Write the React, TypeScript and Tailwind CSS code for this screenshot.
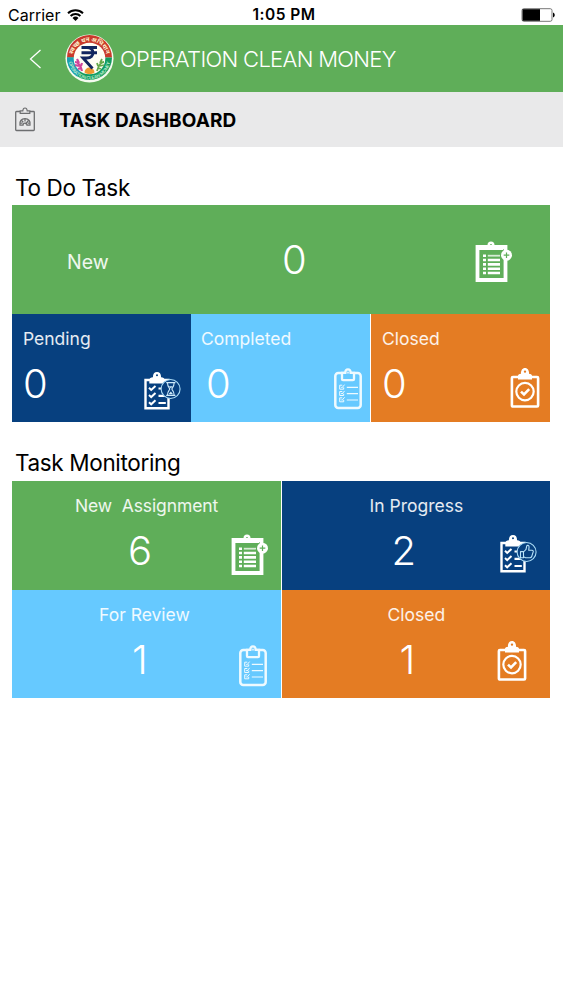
import type { ReactNode } from 'react'

interface TileProps {
  label: string
  count: number
  icon: ReactNode
  color: string
  labelClass: string
  countClass: string
  iconClass: string
}

function ListPlusIcon() {
  return (
    <svg width="38" height="42" viewBox="0 0 38 42" fill="none" aria-hidden="true">
      <path d="M2.500 6h28v33h-28z" stroke="#fff" strokeWidth="3.800" />
      <path d="M4 7h24" stroke="#fff" strokeWidth="4" />
      <path fillRule="evenodd" d="M12.500 6V4a3.500 3.500 0 0 1 7 0v2zM16 2.900a.9.9 0 1 0 0 1.800.9.9 0 0 0 0-1.800z" fill="#fff" />
      <path d="M8 14.700h3M8 19h3M8 23.400h3M8 27.800h3M8 32h3" stroke="#fff" strokeWidth="2.600" />
      <path d="M12.800 14.700H25" stroke="#fff" strokeWidth="1.800" opacity=".75" />
      <path d="M12.800 19H25M12.800 23.400H25M12.800 27.800H25M12.800 32H25" stroke="#fff" strokeWidth="2.600" />
      <circle cx="31.500" cy="14.200" r="5.500" fill="#fff" />
      <path d="M28.700 14.200h5.600M31.500 11.400V17" stroke="#5fae59" strokeWidth="1.200" />
    </svg>
  )
}

function ChecklistIcon({ children }: { children: ReactNode }) {
  return (
    <svg width="38" height="40" viewBox="0 0 38 40" fill="none" aria-hidden="true">
      <path d="M1.500 9h23v28.300h-23z" stroke="#fff" strokeWidth="2.400" />
      <path fillRule="evenodd" d="M5.300 12.500V9.200c0-2 1.600-2.700 3.600-2.900C8.900 2.800 10.400 1 13 1s4.100 1.800 4.100 5.300c2 .2 3.600.9 3.600 2.900v3.300zM13 3.200a1 1 0 1 0 0 2 1 1 0 0 0 0-2z" fill="#fff" />
      <path d="m5 16.800 2.200 2.100 4.300-4M5 24l2.200 2.100 4.300-4M5 31.200l2.200 2.100 4.300-4" stroke="#fff" strokeWidth="2" />
      <path d="M14.500 17.500H21M14.500 24.800h7.300M14.500 32h7.300" stroke="#fff" strokeWidth="2.200" />
      <circle cx="26.600" cy="18" r="9.500" fill="#07407f" stroke="#a9daf5" strokeWidth="1.100" />
      {children}
    </svg>
  )
}

function HourglassIcon() {
  return (
    <ChecklistIcon>
      <path d="M22.200 11.600h9.200M22.200 24.400h9.200M23.500 12c0 4 2.200 4.600 2.200 6s-2.200 2-2.200 6M30.100 12c0 4-2.200 4.600-2.200 6s2.200 2 2.200 6" stroke="#cdeafa" strokeWidth="1.100" />
      <path d="M24.800 15.200h4l-2 2zM24.500 23.200l2.300-2.800 2.300 2.800z" fill="#cdeafa" />
    </ChecklistIcon>
  )
}

function ThumbIcon() {
  return (
    <ChecklistIcon>
      <path d="M20.500 17.600h3v6.200h-3zM23.500 18l2.500-2.700.7-3.200c.3-1.200 2.400-1 2.400.8l-.4 3.300h3.200c1.400 0 1.600 1.100 1.200 2l-1.400 4.300c-.3.900-.9 1.200-1.800 1.200h-4.300l-2.100-.9" stroke="#b9e2f8" strokeWidth="1.100" strokeLinejoin="round" />
    </ChecklistIcon>
  )
}

function ReviewIcon() {
  return (
    <svg width="28" height="42" viewBox="0 0 28 42" fill="none" stroke="#eefaff" aria-hidden="true">
      <rect x="1.300" y="5" width="25.400" height="35" rx="3" strokeWidth="2.500" />
      <path d="M8 4.800v6.400c0 .6.400 1 1 1h10c.6 0 1-.4 1-1V4.800h-3.300C16.700 2.600 15.600 1.400 14 1.400s-2.700 1.200-2.700 3.400z" fill="#66c9ff" strokeWidth="2.300" />
      <circle cx="14" cy="4.600" r=".7" strokeWidth="1" />
      <path d="M9.700 19.400v1.800h-4v-4h2.600M9.700 25.700v1.800h-4v-4h2.600M9.700 32v1.800h-4v-4h2.600M7 18.800l1 1 2.600-3.200M7 25.100l1 1 2.600-3.200M7 31.400l1 1 2.600-3.200" strokeWidth="1" />
      <path d="M12.800 19.400H24M12.800 25.700H24M12.800 32H24" strokeWidth="1.200" />
    </svg>
  )
}

function ClosedIcon() {
  return (
    <svg width="30" height="42" viewBox="0 0 30 42" fill="none" aria-hidden="true">
      <rect x="1.900" y="10" width="26.200" height="29.500" rx="1" stroke="#fff" strokeWidth="2.600" />
      <path fillRule="evenodd" d="M8 12.500V9c0-1.400 1-2 2.800-2C11 3.200 12.300 1 15 1s4 2.200 4.200 6c1.800 0 2.800.6 2.800 2v3.500zM15 3.400a1.200 1.200 0 1 0 0 2.400 1.200 1.200 0 0 0 0-2.400z" fill="#fff" />
      <circle cx="15" cy="24.600" r="8.700" stroke="#fff" strokeWidth="2.200" />
      <path d="m11 24.600 3 2.900 5.200-5.400" stroke="#fff" strokeWidth="2.600" />
    </svg>
  )
}

function DashboardIcon() {
  return (
    <svg width="20" height="25" viewBox="0 0 20 25" fill="none" stroke="#6d6e70" aria-hidden="true">
      <path d="M5 4.500H1.500c-.5 0-.8.3-.8.800v17.400c0 .5.3.8.8.8h17c.5 0 .8-.3.8-.8V5.300c0-.5-.3-.8-.8-.8H15" strokeWidth="1.300" />
      <path d="M5.200 6.300V3.800h2.600C8 1.900 8.700 1 10 1s2 .9 2.200 2.800h2.600v2.500z" strokeWidth="1.200" />
      <path d="M5 18.200c-.9-4 1.500-6.600 5-6.600s5.900 2.600 5 6.600h-3c0-1.200-.8-2-2-2s-2 .8-2 2z" strokeWidth="1.300" />
      <path d="M10 11.500v3M6.300 13.300l2 2M13.700 13.300l-3.300 3.800M5 16.200h2.500M12.800 16.200H15" strokeWidth="1.300" />
    </svg>
  )
}

function Logo() {
  return (
    <svg width="49" height="49" viewBox="0 0 49 49" fill="none" aria-hidden="true">
      <defs>
        <path id="arc-top" d="M7.300 24.500a17.200 17.200 0 0 1 34.400 0" />
        <path id="arc-bottom" d="M3.600 24.500a20.900 20.900 0 0 0 41.800 0" />
      </defs>
      <circle cx="24.500" cy="24.500" r="24" fill="#f4fbef" />
      <path d="M2 23.500a22.500 22.500 0 0 1 45 0z" fill="#c93a2b" />
      <path d="M2 23.500a22.500 22.500 0 0 0 45 0z" fill="#139a60" />
      <path d="M2 23.500c0 8 4 15 10 19l5-7-5-12z" fill="#1b9fb4" />
      <circle cx="24.500" cy="24.500" r="15.800" fill="#fffef4" />
      <path d="M10 28c3 0 5 2 7 9M12 25l2 4M10 31l4 1M13 35l3-1M17 29l-1 3" stroke="#d0459b" strokeWidth="2.200" />
      <path d="M39 28c-3 0-5 2-7 9M37 25l-2 4M39 31l-4 1M36 35l-3-1M32 29l1 3" stroke="#65a94a" strokeWidth="1.800" />
      <path d="M19.500 38.500a5 5 0 0 1 10 0c-3 2-7 2-10 0z" fill="#ef9a31" />
      <path d="M16.500 13.500h15.500M16.500 18.700h15.500M18 13.500h4c8 0 8 10.500 0 10.500h-4l9.500 10.500" stroke="#12265f" strokeWidth="2.900" />
      <text fill="#fff3d0" fontSize="6" fontWeight="700" fontFamily="'Noto Sans', 'DejaVu Sans', sans-serif">
        <textPath href="#arc-top" startOffset="50%" textAnchor="middle">स्वच्छ धन अभियान</textPath>
      </text>
      <text fill="#b9ecc9" fontSize="4.600" fontWeight="600" fontFamily="Inter, sans-serif">
        <textPath href="#arc-bottom" startOffset="50%" textAnchor="middle" textLength="58">OPERATION CLEAN MONEY</textPath>
      </text>
    </svg>
  )
}

function StatusBar() {
  return (
    <div className="grid h-[25px] grid-cols-3 items-center pt-1 pr-2 pl-2 text-black">
      <div className="flex items-center gap-[7px]">
        <span className="text-[16px] leading-5">Carrier</span>
        <svg width="17" height="12" viewBox="0 0 17 12" aria-hidden="true">
          <path d="M1 4.200a10.800 10.800 0 0 1 15 0M3.600 7a7 7 0 0 1 9.800 0" fill="none" stroke="#000" strokeWidth="2" />
          <path d="M5.500 9a4.300 4.300 0 0 1 6 0l-3 3z" fill="#000" />
        </svg>
      </div>
      <span className="pl-[5px] text-center text-[15.500px] leading-5 font-semibold tracking-[0.500px] whitespace-nowrap">1:05 PM</span>
      <svg className="justify-self-end" width="34" height="14" viewBox="0 0 34 14" aria-hidden="true">
        <rect x="1" y=".7" width="30" height="12.600" rx="1.800" fill="#fff" stroke="#777" strokeWidth="1" />
        <path d="M1.500 1.200h17.500v11.600H1.500z" fill="#000" />
        <path d="M32 4.500c2.300.7 2.300 4.300 0 5z" fill="#000" />
      </svg>
    </div>
  )
}

function Tile({ label, count, icon, color, labelClass, countClass, iconClass }: TileProps) {
  return (
    <div className={`overflow-hidden pt-[15px] text-white ${color}`}>
      <div className={`text-[17.500px] leading-5 whitespace-pre text-white/90 ${labelClass}`}>{label}</div>
      <div className="flex items-start justify-between">
        <span className={`mt-[15px] text-[40px] leading-10 font-[350] ${countClass}`}>{count}</span>
        <span className={iconClass}>{icon}</span>
      </div>
    </div>
  )
}

export default function App() {
  return (
    <div className="min-h-[1000px] w-[563px] bg-white font-['Inter',sans-serif]">
      <StatusBar />

      {/* Navigation */}
      <header className="flex h-[67px] items-center bg-[#5fae59] pl-[29px]">
        <svg width="13" height="20" viewBox="0 0 13 20" fill="none" stroke="#fff" strokeWidth="1.300" aria-hidden="true">
          <path d="M11.500 1 1.500 10l10 9" />
        </svg>
        <span className="ml-[23px]"><Logo /></span>
        <h1 className="ml-[6px] text-[22px] leading-7 font-light tracking-[-0.680px] whitespace-nowrap text-white">OPERATION CLEAN MONEY</h1>
      </header>

      <div className="flex h-[55px] items-center bg-[#e9e9ea] pl-[15px]">
        <DashboardIcon />
        <h2 className="ml-[24px] pt-[2px] text-[19px] leading-6 font-bold tracking-[0.120px] whitespace-nowrap text-black">TASK DASHBOARD</h2>
      </div>

      <main className="pr-[13px] pl-3">
        {/* To Do Task */}
        <section className="pt-[26px]">
          <h3 className="pl-[3px] text-[22.500px] leading-[30px] tracking-[-0.350px] text-black">To Do Task</h3>
          <div className="mt-[2px] flex h-[109px] items-start bg-[#5fae59] pl-[55px] text-white">
            <span className="w-[215px] pt-[47px] text-[19.500px] leading-5 text-white/90">New</span>
            <span className="w-[193px] pt-[35px] text-[40px] leading-10 font-[350]">0</span>
            <span className="pt-9"><ListPlusIcon /></span>
          </div>
          {/* First two tiles touch, the last one is set apart by a hairline */}
          <div className="grid h-[108px] grid-cols-[179px_180px_179px]">
            <Tile label="Pending" count={0} color="bg-[#07407f]" icon={<HourglassIcon />} labelClass="pl-[11px]" countClass="pl-[11px]" iconClass="mt-[22px] pr-[9px]" />
            <Tile label="Completed" count={0} color="border-r border-white bg-[#66c9ff]" icon={<ReviewIcon />} labelClass="pl-[10px]" countClass="pl-[15px]" iconClass="mt-[19px] pr-[8px]" />
            <Tile label="Closed" count={0} color="bg-[#e47c23]" icon={<ClosedIcon />} labelClass="pl-[11px]" countClass="pl-[11px]" iconClass="mt-[18px] pr-[10px]" />
          </div>
        </section>

        {/* Task Monitoring */}
        <section className="pt-[26px]">
          <h3 className="pl-[3px] text-[22.500px] leading-[30px] tracking-[-0.350px] text-black">Task Monitoring</h3>
          <div className="mt-[3px] grid h-[217px] grid-cols-2 grid-rows-2 gap-x-px">
            <Tile label="New  Assignment" count={6} color="bg-[#5fae59]" icon={<ListPlusIcon />} labelClass="pl-[63px] tracking-[-0.100px]" countClass="pl-[116px]" iconClass="mt-[18px] pr-[12px]" />
            <Tile label="In Progress" count={2} color="bg-[#07407f]" icon={<ThumbIcon />} labelClass="pl-[88px]" countClass="pl-[110px]" iconClass="mt-[18px] pr-[12px]" />
            <Tile label="For Review" count={1} color="bg-[#66c9ff]" icon={<ReviewIcon />} labelClass="pl-[87px]" countClass="pl-[120px]" iconClass="mt-[20px] pr-[14px]" />
            <Tile label="Closed" count={1} color="bg-[#e47c23]" icon={<ClosedIcon />} labelClass="pl-[106px]" countClass="pl-[118px]" iconClass="mt-[15px] pr-[23px]" />
          </div>
        </section>
      </main>
    </div>
  )
}
